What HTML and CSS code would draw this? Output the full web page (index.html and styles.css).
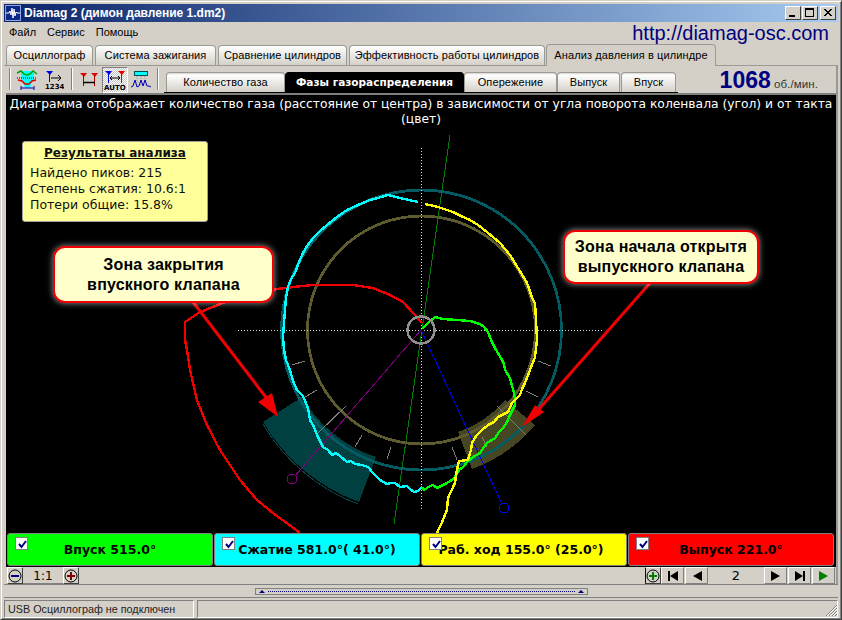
FILE: index.html
```html
<!DOCTYPE html>
<html lang="en">
<head>
    <meta charset="UTF-8">
    <title>Diamag 2</title>
    <link rel="stylesheet" href="styles.css">
</head>
<body>
    <div class="window">
        <div class="titlebar">
            <svg class="app-icon" width="16" height="16" viewBox="0 0 16 16">
                <rect width="16" height="16" fill="#0a2a8a"/>
                <rect x="0.5" y="0.5" width="15" height="15" fill="none" stroke="#8fa4e0"/>
                <polyline points="1,8 4,8 5,6 6,10 7,3 8,13 9,4 10,11 11,7 12,8 15,8" fill="none" stroke="#fff"/>
            </svg>
            <span class="title-text">Diamag 2 (димон давление 1.dm2)</span>
            <div class="caption-btns">
                <div class="caption-btn"><svg width="14" height="11"><rect x="3" y="8" width="6" height="2" fill="#000"/></svg></div>
                <div class="caption-btn"><svg width="14" height="11"><rect x="2.5" y="1.5" width="8" height="8" fill="none" stroke="#000"/><rect x="2" y="1" width="9" height="2" fill="#000"/></svg></div>
                <div class="caption-btn close"><svg width="14" height="11"><path d="M3 2 L10 9 M4 2 L11 9 M10 2 L3 9 M11 2 L4 9" stroke="#000"/></svg></div>
            </div>
        </div>

        <div class="menubar">
            <span class="menu-item">Файл</span>
            <span class="menu-item">Сервис</span>
            <span class="menu-item">Помощь</span>
            <span class="site-link">http://diamag-osc.com</span>
        </div>

        <div class="tabs">
            <div class="tab tab-1">Осциллограф</div>
            <div class="tab tab-2">Система зажигания</div>
            <div class="tab tab-3">Сравнение цилиндров</div>
            <div class="tab tab-4">Эффективность работы цилиндров</div>
            <div class="tab tab-5 active">Анализ давления в цилиндре</div>
        </div>

        <div class="panel">
            <div class="toolbar">
                <div class="sep"></div>
                <div class="tool">
                    <svg width="22" height="22" viewBox="0 0 22 22">
                        <rect x="5" y="2" width="13" height="10" fill="#00ffff"/>
                        <polygon points="7,12 16,12 14,19 9,19" fill="#00ffff"/>
                        <polyline points="1,4 5,2 8,5 11,6 14,5 17,2 21,5" fill="none" stroke="#00a000" stroke-width="1.5"/>
                        <line x1="1" y1="9" x2="21" y2="9" stroke="#000" stroke-dasharray="1 1"/>
                        <polyline points="2,11 6,12 9,15 13,15 16,12 20,11" fill="none" stroke="#e00000" stroke-width="1.5"/>
                        <path d="M5 17 V21 M18 17 V21 M5 19 H18" stroke="#0000c0"/>
                    </svg>
                </div>
                <div class="tool">
                    <svg width="22" height="22" viewBox="0 0 22 22">
                        <polygon points="4,2 11,2 8,6" fill="#0000e0"/>
                        <line x1="7.5" y1="4" x2="7.5" y2="13" stroke="#0000e0"/>
                        <path d="M9 9 H19 M16 6 L19 9 L16 12" fill="none" stroke="#000"/>
                        <text x="3" y="20" class="icon-text">1234</text>
                    </svg>
                </div>
                <div class="sep gap"></div>
                <div class="tool">
                    <svg width="22" height="22" viewBox="0 0 22 22">
                        <polygon points="2,4 9,4 6,8" fill="#e00000"/>
                        <polygon points="13,4 20,4 17,8" fill="#e00000"/>
                        <path d="M5.5 6 V17 M16.5 6 V17" stroke="#b00000"/>
                        <path d="M5 13.5 H17" stroke="#000" stroke-width="1.5"/>
                    </svg>
                </div>
                <div class="tool pressed">
                    <svg width="22" height="22" viewBox="0 0 22 22">
                        <polygon points="1,2 8,2 5,6" fill="#0000e0"/>
                        <polygon points="14,2 21,2 18,6" fill="#e00000"/>
                        <path d="M4.5 4 V14" stroke="#0000e0"/>
                        <path d="M17.5 4 V14" stroke="#e00000"/>
                        <path d="M6 9 H16 M8 7 L6 9 L8 11 M14 7 L16 9 L14 11" fill="none" stroke="#000"/>
                        <text x="0" y="21" class="icon-text">AUTO</text>
                    </svg>
                </div>
                <div class="tool">
                    <svg width="22" height="22" viewBox="0 0 22 22">
                        <rect x="4.5" y="2.5" width="13" height="4" fill="#00ffff" stroke="#005050"/>
                        <path d="M7 7 V17 M11 7 V17 M15 7 V17" stroke="#999" stroke-dasharray="1 1"/>
                        <polyline points="1,18 3,17 5,11 7,18 9,17 11,11 13,17 15,11 17,17 19,17 21,18" fill="none" stroke="#0000c0"/>
                    </svg>
                </div>
                <div class="sep gap-2"></div>
                <div class="subtabs">
                    <div class="subtab st-1">Количество газа</div>
                    <div class="subtab st-2 active">Фазы газораспределения</div>
                    <div class="subtab st-3">Опережение</div>
                    <div class="subtab st-4">Выпуск</div>
                    <div class="subtab st-5">Впуск</div>
                </div>
                <div class="rpm"><b>1068</b> <span>об./мин.</span></div>
            </div>

            <div class="plot">
                <svg class="chart" width="830" height="438" viewBox="6 95 830 438">
                    <path class="sector-teal" d="M263 422 A183 183 0 0 0 359 502 L376 457 A135 135 0 0 1 302 397 Z"/>
                    <path class="sector-edge" d="M263 424 A185 185 0 0 0 358 504"/>
                    <path class="sector-olive" d="M458 432 A109 109 0 0 0 505 400 L535 425 A148 148 0 0 1 472 469 Z"/>

                    <circle class="ring-teal" cx="421.5" cy="330" r="140"/>
                    <circle class="ring-olive" cx="421.5" cy="330" r="114"/>

                    <line class="cross" x1="238" y1="330.5" x2="604" y2="330.5"/>
                    <line class="cross" x1="421.5" y1="148" x2="421.5" y2="511"/>
                    <line class="axis-green" x1="450" y1="135" x2="394" y2="524"/>
                    <line class="axis-purple" x1="421" y1="330" x2="295" y2="476"/>
                    <circle class="axis-purple" cx="292" cy="479" r="5"/>
                    <line class="axis-blue" x1="421" y1="330" x2="502" y2="504"/>
                    <circle class="axis-blue" cx="504" cy="508" r="5"/>

                    <path class="ticks" d="M292 365 L305 361 M305 397 L317 390 M318 433 L346 406 M355 447 L362 435 M387 459 L391 447 M452 447 L457 460 M482 437 L487 447 M497 406 L526 435 M526 391 L538 397 M538 361 L551 366"/>

                    <polyline class="curve red" points="422,323 413,313 403,302 390,295 373,288 353,285 313,285 293,287 277,289 250,295 223,303 200,312 185,322 185,340 187,350 190,370 197,400 207,425 220,450 232,468 240,480 257,500 273,513 292,527 300,533"/>
                    <polyline class="curve cyan" points="418,202 409,200 400,198 388,195 378,198 370,200 358,205 347,210 337,217 327,225 320,231 313,238 307,246 303,253 299,262 295,273 291,279 288,287 286,298 285,310 284,323 283,337 284,350 286,360 290,370 293,381 297,390 303,396 308,408 310,420 314,427 318,437 323,447 328,450 332,455 336,453 340,456 347,462 351,461 355,464 362,465 368,467 373,473 380,480 387,484 391,483 395,483 400,487 407,486 410,489 414,492 418,491 422,487"/>
                    <polyline class="curve green" points="422,487 424,490 427,488 430,486 433,485 437,488 441,486 447,483 452,480 455,477 459,470 463,467 468,461 473,457 480,453 484,447 487,443 495,438 499,432 503,428 507,422 510,415 515,405 515,398 514,393 510,378 505,370 504,364 502,360 498,353 495,348 491,340 488,332 484,327 480,324 470,321 457,320 443,319 435,317 428,323 422,329"/>
                    <polyline class="curve yellow" points="425,204 438,207 453,212 461,216 470,220 478,225 487,232 500,243 510,255 518,268 523,276 527,283 533,300 535,303 536,320 537,340 535,357 530,370 525,383 522,389 520,395 512,403 508,412 498,417 494,422 488,425 482,430 476,436 472,443 471,450 468,460 459,461 458,465 456,475 455,483 448,498 447,510 443,520 437,533"/>

                    <circle class="hub" cx="421" cy="330" r="13.5"/>

                    <line class="arrow-line" x1="193" y1="302" x2="268" y2="400"/>
                    <polygon class="arrow-head" points="278,417 258,402 272,393"/>
                    <line class="arrow-line" x1="650" y1="283" x2="539" y2="409"/>
                    <polygon class="arrow-head" points="522,427 535,405 544,412"/>
                </svg>

                <p class="desc">Диаграмма отображает количество газа (расстояние от центра) в зависимости от угла поворота коленвала (угол) и от такта (цвет)</p>

                <div class="results">
                    <h4>Результаты анализа</h4>
                    <div>Найдено пиков: 215</div>
                    <div>Степень сжатия: 10.6:1</div>
                    <div>Потери общие: 15.8%</div>
                </div>

                <div class="callout callout-left">Зона закрытия<br>впускного клапана</div>
                <div class="callout callout-right">Зона начала открытя<br>выпускного клапана</div>
            </div>

            <div class="phases">
                <div class="phase green-bg"><svg class="check" width="13" height="13"><path d="M3 6 L5.5 9 L10 3" fill="none" stroke="#000080" stroke-width="2"/></svg>Впуск 515.0°</div>
                <div class="phase cyan-bg"><svg class="check" width="13" height="13"><path d="M3 6 L5.5 9 L10 3" fill="none" stroke="#000080" stroke-width="2"/></svg>Сжатие 581.0°( 41.0°)</div>
                <div class="phase yellow-bg"><svg class="check" width="13" height="13"><path d="M3 6 L5.5 9 L10 3" fill="none" stroke="#000080" stroke-width="2"/></svg>Раб. ход 155.0° (25.0°)</div>
                <div class="phase red-bg"><svg class="check" width="13" height="13"><path d="M3 6 L5.5 9 L10 3" fill="none" stroke="#000080" stroke-width="2"/></svg>Выпуск 221.0°</div>
            </div>

            <div class="controls">
                <div class="zoom-btn"><svg width="14" height="14"><circle cx="7" cy="7" r="6" fill="none" stroke="#000"/><rect x="3" y="6" width="8" height="2" fill="#000080"/></svg></div>
                <div class="zoom-label">1:1</div>
                <div class="zoom-btn"><svg width="14" height="14"><circle cx="7" cy="7" r="6" fill="none" stroke="#000"/><path d="M3 7 H11 M7 3 V11" stroke="#800000" stroke-width="2"/></svg></div>
                <div class="spring"></div>
                <div class="zoom-btn plus-green"><svg width="14" height="14"><circle cx="7" cy="7" r="6" fill="none" stroke="#000"/><path d="M3 7 H11 M7 3 V11" stroke="#008000" stroke-width="2"/></svg></div>
                <div class="nav-btn"><svg width="12" height="10"><rect x="1" y="0" width="2" height="10"/><polygon points="3,5 11,0 11,10"/></svg></div>
                <div class="nav-btn"><svg width="12" height="10"><polygon points="2,5 11,0 11,10"/></svg></div>
                <div class="page">2</div>
                <div class="nav-btn"><svg width="12" height="10"><polygon points="10,5 1,0 1,10"/></svg></div>
                <div class="nav-btn"><svg width="12" height="10"><polygon points="9,5 1,0 1,10"/><rect x="9" y="0" width="2" height="10"/></svg></div>
                <div class="nav-btn"><svg width="12" height="10"><polygon points="10,5 1,0 1,10" fill="#008000"/></svg></div>
            </div>
        </div>

        <div class="splitter">
            <div class="grip">
                <span class="grip-arrow"></span>
                <span class="grip-dots"></span>
                <span class="grip-arrow"></span>
            </div>
        </div>

        <div class="statusbar">
            <div class="status-cell first">USB Осциллограф не подключен</div>
            <div class="status-cell rest"></div>
            <svg class="size-grip" width="13" height="13"><path d="M12 1 L1 12 M12 4 L4 12 M12 7 L7 12 M12 10 L10 12" stroke="#808080"/><path d="M12 2 L2 12 M12 5 L5 12 M12 8 L8 12" stroke="#fff"/></svg>
        </div>
    </div>
</body>
</html>
```
FILE: styles.css
```css
* {
    box-sizing: border-box;
}
html, body {
    margin: 0;
    height: 620px;
    overflow: hidden;
    background: #d4d0c8;
}
body {
    font-family: "Liberation Sans", sans-serif;
    font-size: 11px;
    letter-spacing: .1px;
    color: #000;
}
.window {
    width: 842px;
    height: 620px;
    display: flex;
    flex-direction: column;
    background: #d4d0c8;
    border: 1px solid;
    border-color: #d4d0c8 #404040 #404040 #d4d0c8;
    box-shadow: inset 1px 1px 0 #fff, inset -1px -1px 0 #808080;
    padding: 3px;
}

/* title bar */
.titlebar {
    height: 18px;
    flex: none;
    display: flex;
    align-items: center;
    background: linear-gradient(90deg, #0a246a, #a6caf0);
    padding-left: 1px;
}
.app-icon {
    flex: none;
}
.title-text {
    margin-left: 3px;
    color: #fff;
    font-weight: bold;
    font-size: 12px;
    letter-spacing: 0;
    white-space: nowrap;
}
.caption-btns {
    margin-left: auto;
    margin-right: 2px;
    display: flex;
}
.caption-btn {
    width: 16px;
    height: 14px;
    margin-left: 1px;
    background: #d4d0c8;
    border: 1px solid;
    border-color: #fff #404040 #404040 #fff;
    display: flex;
}
.caption-btn.close {
    margin-left: 2px;
}

/* menu */
.menubar {
    height: 20px;
    flex: none;
    display: flex;
    align-items: center;
    padding-left: 5px;
    gap: 11px;
    letter-spacing: 0;
}
.site-link {
    margin-left: auto;
    margin-right: 9px;
    margin-top: 2px;
    font-size: 20px;
    color: #000080;
}

/* main tabs */
.tabs {
    height: 23px;
    flex: none;
    display: flex;
    align-items: flex-end;
    padding-left: 2px;
    gap: 2px;
}
.tab {
    height: 20px;
    background: linear-gradient(#fff, #d4d0c8);
    border: 1px solid #9a9a94;
    border-bottom: none;
    border-radius: 4px 4px 0 0;
    text-align: center;
    line-height: 19px;
    white-space: nowrap;
}
.tab.active {
    height: 22px;
    background: #d4d0c8;
    margin-left: -1px;
    margin-bottom: -1px;
    position: relative;
    line-height: 20px;
}
.tab-1 { width: 87px; }
.tab-2 { width: 121px; }
.tab-3 { width: 129px; }
.tab-4 { width: 196px; }
.tab-5 { width: 170px; }

.panel {
    height: 519px;
    flex: none;
    border-top: 1px solid #9a9a94;
    border-right: 2px solid #9a9a94;
    padding-left: 2px;
    display: flex;
    flex-direction: column;
}

/* toolbar */
.toolbar {
    height: 29px;
    flex: none;
    display: flex;
    align-items: flex-end;
    border-bottom: 2px solid #808080;
}
.sep {
    width: 2px;
    height: 22px;
    margin: 0 3px 2px 3px;
    border-left: 1px solid #808080;
    border-right: 1px solid #fff;
    flex: none;
    align-self: center;
}
.sep.gap {
    margin: 0 3px 2px 5px;
}
.sep.gap-2 {
    margin: 0 7px 2px 3px;
}
.tool {
    width: 26px;
    height: 26px;
    flex: none;
    display: flex;
    align-items: center;
    justify-content: center;
    align-self: center;
}
.tool.pressed {
    background: repeating-conic-gradient(#fff 0 25%, #c8c6c0 0 50%) 0 0 / 2px 2px;
    border: 1px solid;
    border-color: #808080 #fff #fff #808080;
}
.icon-text {
    font-family: "DejaVu Sans", sans-serif;
    font-size: 7px;
    font-weight: bold;
    letter-spacing: 0;
}

.subtabs {
    display: flex;
    align-items: flex-end;
    border-bottom: 1px solid #000;
    padding: 0 2px;
    margin-left: -2px;
    height: 21px;
    flex: none;
}
.subtab {
    height: 20px;
    background: linear-gradient(#d4d0c8 0, #fff 10%, #d4d0c8);
    border: 1px solid #9a9a94;
    border-bottom: none;
    border-radius: 4px 4px 0 0;
    text-align: center;
    line-height: 19px;
    white-space: nowrap;
}
.subtab.active {
    background: #000;
    color: #fff;
    border-color: #000;
    font-family: "DejaVu Sans", sans-serif;
    font-size: 10.5px;
    font-weight: bold;
    letter-spacing: 0;
}
.st-1 { width: 119px; }
.st-2 { width: 179px; }
.st-3 { width: 93px; }
.st-4 { width: 63px; margin-right: 1px; }
.st-5 { width: 55px; }
.rpm {
    margin-left: auto;
    margin-right: 18px;
    margin-bottom: -4px;
    white-space: nowrap;
    line-height: 25px;
}
.rpm b {
    color: #000080;
    font-size: 23px;
    letter-spacing: 0;
}
.rpm span {
    font-size: 11.5px;
    color: #333;
}

/* plot */
.plot {
    position: relative;
    height: 438px;
    flex: none;
    background: #000;
    overflow: hidden;
}
.chart {
    position: absolute;
    left: 0;
    top: 0;
    shape-rendering: crispEdges;
}
.desc {
    position: relative;
    margin: 0;
    color: #fff;
    font-family: "DejaVu Sans", sans-serif;
    font-size: 12.3px;
    letter-spacing: 0;
    line-height: 15px;
    text-align: center;
    padding: 2px 1px 0;
}
.sector-teal {
    fill: rgba(0, 128, 128, .5);
}
.sector-edge {
    fill: none;
    stroke: #064446;
}
.sector-olive {
    fill: rgba(128, 128, 64, .55);
}
.ring-teal {
    fill: none;
    stroke: #045c62;
    stroke-width: 2.8;
}
.ring-olive {
    fill: none;
    stroke: #5f5b30;
    stroke-width: 2.8;
}
.cross {
    stroke: #ddd;
    stroke-dasharray: 1 2;
}
.axis-green {
    stroke: #008000;
}
.axis-purple {
    stroke: #800080;
    fill: none;
}
.axis-blue {
    stroke: #0000e0;
    fill: none;
}
.ticks {
    stroke: #808080;
    fill: none;
}
.curve {
    fill: none;
    stroke-width: 2.4;
}
.curve.red { stroke: #f00000; }
.curve.cyan { stroke: #00ffff; }
.curve.green { stroke: #00ff00; }
.curve.yellow { stroke: #ffff00; }
.hub {
    fill: none;
    stroke: #909090;
    stroke-width: 2.4;
}
.arrow-line {
    stroke: #f00000;
    stroke-width: 3;
    shape-rendering: auto;
}
.arrow-head {
    fill: #f00000;
    shape-rendering: auto;
}

.results {
    position: absolute;
    left: 16px;
    top: 46px;
    width: 186px;
    height: 81px;
    background: #ffff99;
    border: 1px solid #a0a0a0;
    border-radius: 3px;
    padding: 3px 7px;
    font-family: "DejaVu Sans", sans-serif;
    font-size: 12.5px;
    letter-spacing: 0;
    line-height: 16px;
    color: #111;
}
.results h4 {
    margin: 0 0 4px;
    text-align: center;
    text-decoration: underline;
    font-size: 12px;
    line-height: 16px;
}
.callout {
    position: absolute;
    background: #ffffcc;
    border: 2px solid #f00000;
    border-radius: 12px;
    box-shadow: 0 0 6px rgba(255, 255, 255, .6);
    font-size: 16px;
    line-height: 20px;
    font-weight: bold;
    letter-spacing: .2px;
    text-align: center;
    display: flex;
    align-items: center;
    justify-content: center;
}
.callout-left {
    left: 47px;
    top: 151px;
    width: 221px;
    height: 57px;
}
.callout-right {
    left: 557px;
    top: 135px;
    width: 196px;
    height: 54px;
}

/* phase buttons */
.phases {
    height: 34px;
    flex: none;
    display: flex;
    gap: 1px;
    padding: 0 0 0 1px;
    background: #000;
}
.phase {
    position: relative;
    width: 206px;
    height: 33px;
    border: 1px solid #808080;
    border-radius: 3px;
    display: flex;
    align-items: center;
    justify-content: center;
    font-family: "DejaVu Sans", sans-serif;
    font-weight: bold;
    font-size: 12.5px;
    letter-spacing: 0;
    white-space: nowrap;
}
.green-bg { background: #00ff00; }
.cyan-bg { background: #00ffff; }
.yellow-bg { background: #ffff00; padding-right: 6px; }
.red-bg { background: #ff0000; }
.check {
    position: absolute;
    left: 7px;
    top: 3px;
    background: #fff;
    border: 1px solid #808080;
}

/* bottom controls */
.controls {
    height: 17px;
    flex: none;
    display: flex;
    align-items: stretch;
    padding: 0 1px;
}
.zoom-btn {
    width: 16px;
    border: 1px solid;
    border-color: #fff #404040 #404040 #fff;
    display: flex;
    align-items: center;
    justify-content: center;
}
.plus-green {
    border-left-color: #000080;
}
.zoom-label {
    width: 40px;
    text-align: center;
    font-family: "DejaVu Sans", sans-serif;
    font-size: 12px;
    line-height: 18px;
    border-bottom: 1px solid #808080;
}
.spring {
    flex: 1;
}
.nav-btn {
    width: 23px;
    border: 1px solid;
    border-color: #fff #808080 #808080 #fff;
    display: flex;
    align-items: center;
    justify-content: center;
}
.nav-btn + .nav-btn {
    margin-left: 1px;
}
.page {
    width: 56px;
    text-align: center;
    font-family: "DejaVu Sans", sans-serif;
    font-size: 13px;
    line-height: 17px;
}

/* splitter and status */
.splitter {
    height: 14px;
    flex: none;
    border-top: 1px solid #808080;
    border-bottom: 1px solid #808080;
    display: flex;
    justify-content: center;
    align-items: center;
}
.grip {
    width: 333px;
    height: 7px;
    border: 1px solid #808080;
    display: flex;
    align-items: center;
    padding: 0 3px;
    gap: 3px;
}
.grip-arrow {
    width: 0;
    height: 0;
    border-left: 3px solid transparent;
    border-right: 3px solid transparent;
    border-bottom: 3px solid #000080;
}
.grip-dots {
    flex: 1;
    border-top: 1px dotted #000080;
}
.statusbar {
    flex: 1;
    display: flex;
    gap: 3px;
    padding-top: 2px;
    position: relative;
}
.status-cell {
    height: 18px;
    border: 1px solid;
    border-color: #808080 #fff #fff #808080;
    font-size: 10.8px;
    letter-spacing: 0;
    line-height: 16px;
    padding-left: 3px;
    color: #222;
    white-space: nowrap;
}
.first {
    width: 190px;
}
.rest {
    flex: 1;
}
.size-grip {
    position: absolute;
    right: 0;
    bottom: 1px;
}
```
